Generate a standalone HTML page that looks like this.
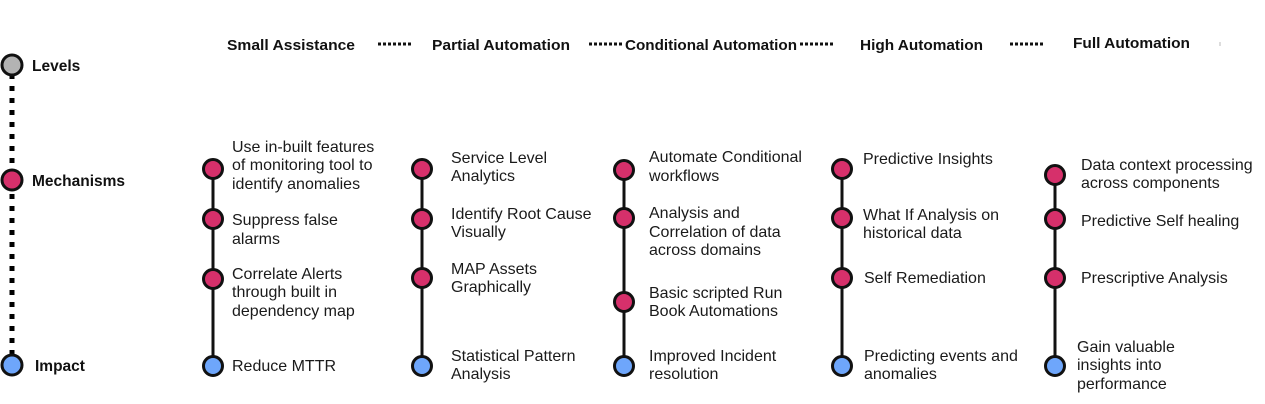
<!DOCTYPE html>
<html><head><meta charset="utf-8"><style>
html,body{margin:0;padding:0;background:#fff;width:1265px;height:404px;overflow:hidden}
svg{display:block}
text{font-family:"Liberation Sans",sans-serif;fill:#111}
.h{font-size:15px;font-weight:bold}
.l{font-size:15.5px;font-weight:bold}
.m{font-size:16px;fill:#1a1a1a}
</style></head><body>
<svg width="1265" height="404" viewBox="0 0 1265 404">
<text class="h" x="227" y="50" textLength="128" lengthAdjust="spacingAndGlyphs">Small Assistance</text>
<text class="h" x="432" y="50" textLength="138" lengthAdjust="spacingAndGlyphs">Partial Automation</text>
<text class="h" x="625" y="50" textLength="172" lengthAdjust="spacingAndGlyphs">Conditional Automation</text>
<text class="h" x="860" y="50" textLength="123" lengthAdjust="spacingAndGlyphs">High Automation</text>
<text class="h" x="1073" y="48" textLength="117" lengthAdjust="spacingAndGlyphs">Full Automation</text>
<g stroke="#111" stroke-width="3" stroke-dasharray="3 2">
<line x1="378" y1="44" x2="411" y2="44"/>
<line x1="589" y1="44" x2="622" y2="44"/>
<line x1="800" y1="44" x2="833" y2="44"/>
<line x1="1010" y1="44" x2="1043" y2="44"/>
</g>
<line x1="1220" y1="42" x2="1220" y2="46" stroke="#bbb" stroke-width="1"/>

<line x1="12" y1="74" x2="12" y2="356" stroke="#000" stroke-width="5" stroke-dasharray="5 7"/>
<g stroke="#111" stroke-width="3">
<circle cx="12" cy="65" r="10" fill="#b3b3b3"/>
<circle cx="12" cy="180" r="10" fill="#d6306b"/>
<circle cx="12" cy="365" r="10" fill="#6ea6fb"/>
</g>
<text class="l" x="32" y="71">Levels</text>
<text class="l" x="32" y="186">Mechanisms</text>
<text class="l" x="35" y="371">Impact</text>

<g stroke="#111" stroke-width="3">
<line x1="213" y1="169" x2="213" y2="366"/>
<line x1="422" y1="169" x2="422" y2="366"/>
<line x1="624" y1="170" x2="624" y2="366"/>
<line x1="842" y1="169" x2="842" y2="366"/>
<line x1="1055" y1="175" x2="1055" y2="366"/>
</g>
<g stroke="#111" stroke-width="3" fill="#d6306b">
<circle cx="213" cy="169" r="9.5"/><circle cx="213" cy="219" r="9.5"/><circle cx="213" cy="279" r="9.5"/>
<circle cx="422" cy="169" r="9.5"/><circle cx="422" cy="219" r="9.5"/><circle cx="422" cy="278" r="9.5"/>
<circle cx="624" cy="170" r="9.5"/><circle cx="624" cy="218" r="9.5"/><circle cx="624" cy="302" r="9.5"/>
<circle cx="842" cy="169" r="9.5"/><circle cx="842" cy="218" r="9.5"/><circle cx="842" cy="278" r="9.5"/>
<circle cx="1055" cy="175" r="9.5"/><circle cx="1055" cy="219" r="9.5"/><circle cx="1055" cy="278" r="9.5"/>
</g>
<g stroke="#111" stroke-width="3" fill="#6ea6fb">
<circle cx="213" cy="366" r="9.5"/><circle cx="422" cy="366" r="9.5"/><circle cx="624" cy="366" r="9.5"/>
<circle cx="842" cy="366" r="9.5"/><circle cx="1055" cy="366" r="9.5"/>
</g>

<text class="m" x="232" y="152">Use in-built features</text>
<text class="m" x="232" y="170">of monitoring tool to</text>
<text class="m" x="232" y="189">identify anomalies</text>
<text class="m" x="232" y="225">Suppress false</text>
<text class="m" x="232" y="244">alarms</text>
<text class="m" x="232" y="279">Correlate Alerts</text>
<text class="m" x="232" y="297">through built in</text>
<text class="m" x="232" y="316">dependency map</text>
<text class="m" x="232" y="371">Reduce MTTR</text>

<text class="m" x="451" y="163">Service Level</text>
<text class="m" x="451" y="181">Analytics</text>
<text class="m" x="451" y="219">Identify Root Cause</text>
<text class="m" x="451" y="237">Visually</text>
<text class="m" x="451" y="274">MAP Assets</text>
<text class="m" x="451" y="292">Graphically</text>
<text class="m" x="451" y="361">Statistical Pattern</text>
<text class="m" x="451" y="379">Analysis</text>

<text class="m" x="649" y="162">Automate Conditional</text>
<text class="m" x="649" y="181">workflows</text>
<text class="m" x="649" y="218">Analysis and</text>
<text class="m" x="649" y="237">Correlation of data</text>
<text class="m" x="649" y="255">across domains</text>
<text class="m" x="649" y="298">Basic scripted Run</text>
<text class="m" x="649" y="316">Book Automations</text>
<text class="m" x="649" y="361">Improved Incident</text>
<text class="m" x="649" y="379">resolution</text>

<text class="m" x="863" y="164">Predictive Insights</text>
<text class="m" x="863" y="220">What If Analysis on</text>
<text class="m" x="863" y="238">historical data</text>
<text class="m" x="864" y="283">Self Remediation</text>
<text class="m" x="864" y="361">Predicting events and</text>
<text class="m" x="864" y="379">anomalies</text>

<text class="m" x="1081" y="170">Data context processing</text>
<text class="m" x="1081" y="188">across components</text>
<text class="m" x="1081" y="226">Predictive Self healing</text>
<text class="m" x="1081" y="283">Prescriptive Analysis</text>
<text class="m" x="1077" y="352">Gain valuable</text>
<text class="m" x="1077" y="370">insights into</text>
<text class="m" x="1077" y="389">performance</text>
</svg>
</body></html>
